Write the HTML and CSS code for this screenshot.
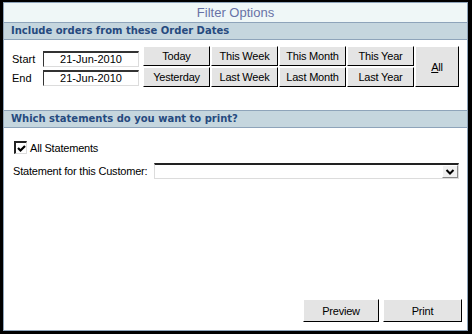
FILE: index.html
```html
<!DOCTYPE html>
<html lang="en">
<head>
    <meta charset="UTF-8">
    <title>Filter Options</title>
    <link rel="stylesheet" href="styles.css">
</head>
<body>
    <div class="window">
        <div class="title">Filter Options</div>

        <div class="section-head">Include orders from these Order Dates</div>
        <div class="dates">
            <div class="date-fields">
                <label class="field-label">Start</label>
                <div class="date-input">21-Jun-2010</div>
                <label class="field-label">End</label>
                <div class="date-input">21-Jun-2010</div>
            </div>
            <div class="quick-dates">
                <button class="btn">Today</button>
                <button class="btn">This Week</button>
                <button class="btn">This Month</button>
                <button class="btn">This Year</button>
                <button class="btn all"><u>A</u>ll</button>
                <button class="btn">Yesterday</button>
                <button class="btn">Last Week</button>
                <button class="btn">Last Month</button>
                <button class="btn">Last Year</button>
            </div>
        </div>

        <div class="section-head second">Which statements do you want to print?</div>
        <div class="statements">
            <div class="check-row">
                <span class="checkbox">
                    <svg width="9" height="9" viewBox="0 0 9 9"><path d="M1 4 L3.5 6.5 L8 2" fill="none" stroke="#000" stroke-width="2.2"/></svg>
                </span>
                <span>All Statements</span>
            </div>
            <div class="customer-row">
                <span class="customer-label">Statement for this Customer:</span>
                <div class="select">
                    <span class="select-arrow">
                        <svg width="10" height="6" viewBox="0 0 10 6"><path d="M1.5 1 L5 4.5 L8.5 1" fill="none" stroke="#000" stroke-width="2"/></svg>
                    </span>
                </div>
            </div>
        </div>

        <div class="actions">
            <button class="btn preview">Preview</button>
            <button class="btn print">Print</button>
        </div>
    </div>
</body>
</html>
```

FILE: styles.css
```css
html, body {
    margin: 0;
    height: 100%;
}
body {
    background: #000;
    padding: 2px 4px 3px 3px;
    box-sizing: border-box;
    font-family: "Liberation Sans", Arial, sans-serif;
    font-size: 11px;
    color: #000;
}
.window {
    height: 100%;
    box-sizing: border-box;
    border: 1px solid #8ea4ba;
    background: #fff;
    display: flex;
    flex-direction: column;
}
.title {
    height: 19px;
    line-height: 19px;
    background: #eff7f7;
    border-bottom: 1px solid #8ea4ba;
    text-align: center;
    color: #6872a6;
    font-size: 13px;
}
.section-head {
    height: 16px;
    line-height: 16px;
    background: #c5d6de;
    border-bottom: 1px solid #8ea4ba;
    padding-left: 7px;
    font-family: "DejaVu Sans", Verdana, sans-serif;
    font-weight: bold;
    font-size: 10px;
    color: #264a7e;
}
.section-head.second {
    border-top: 1px solid #8ea4ba;
}
.dates {
    height: 70px;
    box-sizing: border-box;
    display: flex;
    padding: 6px 0 0 8px;
}
.date-fields {
    display: grid;
    grid-template-columns: 31px 96px;
    grid-auto-rows: 16px;
    row-gap: 3px;
    align-items: center;
    align-content: start;
    margin: 5px 4px 0 0;
}
.date-input {
    height: 16px;
    box-sizing: border-box;
    border-style: solid;
    border-width: 2px 1px 1px 1px;
    border-color: #333 #dcdcdc #dcdcdc #333;
    text-align: center;
    line-height: 13px;
}
.quick-dates {
    display: grid;
    grid-template-columns: repeat(4, 67px) 44px;
    grid-template-rows: 20px 20px;
    gap: 1px;
}
.btn {
    font-family: "Liberation Sans", Arial, sans-serif;
    font-size: 11px;
    letter-spacing: -0.2px;
    color: #000;
    background: #e4e4e4;
    border: 1px solid;
    border-color: #fff #000 #000 #fff;
    padding: 0;
    margin: 0;
}
.all {
    grid-column: 5;
    grid-row: 1 / 3;
}
.statements {
    padding: 13px 0 0 9px;
}
.check-row {
    display: flex;
    align-items: center;
    gap: 3px;
    height: 13px;
    letter-spacing: -0.2px;
}
.checkbox {
    width: 13px;
    height: 13px;
    margin-left: 1px;
    box-sizing: border-box;
    border-style: solid;
    border-width: 2px 1px 1px 2px;
    border-color: #222 #dcdcdc #dcdcdc #222;
    display: flex;
    align-items: center;
    justify-content: center;
}
.customer-row {
    display: flex;
    align-items: center;
    margin-top: 9px;
}
.customer-label {
    width: 141px;
    letter-spacing: -0.2px;
}
.select {
    width: 305px;
    height: 16px;
    box-sizing: border-box;
    border-style: solid;
    border-width: 2px 1px 1px 1px;
    border-color: #222 #dcdcdc #dcdcdc #dcdcdc;
    display: flex;
    justify-content: flex-end;
}
.select-arrow {
    width: 16px;
    height: 13px;
    box-sizing: border-box;
    background: #f0f0f0;
    border: 1px solid;
    border-color: #fff #8a8a8a #8a8a8a #fff;
    display: flex;
    align-items: center;
    justify-content: center;
}
.actions {
    margin-top: auto;
    display: flex;
    justify-content: flex-end;
    gap: 4px;
    padding: 0 5px 8px 0;
}
.preview {
    width: 76px;
    height: 23px;
}
.print {
    width: 79px;
    height: 23px;
}
```
